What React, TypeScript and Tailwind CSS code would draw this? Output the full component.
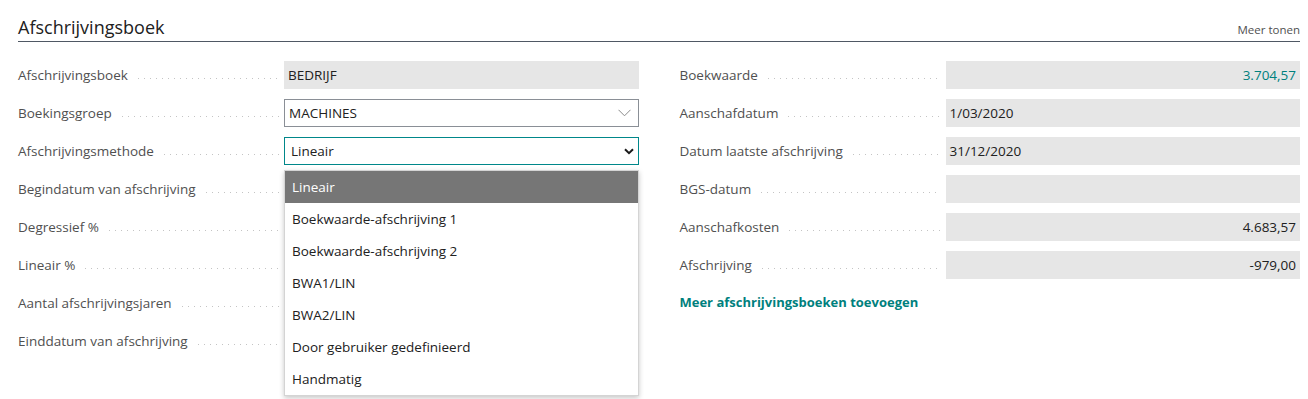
import React from "react";

const font = { fontFamily: '"Open Sans", "Noto Sans", sans-serif' };

function Dots() {
  return (
    <div className="flex-1 mx-[10px] mr-[5px] self-center translate-y-[3px] h-px bg-[linear-gradient(to_right,#c4c4c4_1px,transparent_1px)] bg-[length:6px_1px] bg-repeat-x" />
  );
}

function Row({ label, children }: { label: string; children: React.ReactNode }) {
  return (
    <div className="flex items-center h-[28px]">
      <div className="flex items-center w-[266px] shrink-0 h-full">
        <span className="text-[13.5px] text-[#505050] whitespace-nowrap">{label}</span>
        <Dots />
      </div>
      <div className="flex-1 h-full relative">{children}</div>
    </div>
  );
}

function ReadField({ value, right, teal }: { value?: string; right?: boolean; teal?: boolean }) {
  return (
    <div
      className={`h-full bg-[#e6e6e6] flex items-center px-[4px] text-[13.5px] ${right ? "justify-end" : ""} ${teal ? "text-[#00807d]" : "text-[#212121]"}`}
    >
      {value}
    </div>
  );
}

const options = [
  "Lineair",
  "Boekwaarde-afschrijving 1",
  "Boekwaarde-afschrijving 2",
  "BWA1/LIN",
  "BWA2/LIN",
  "Door gebruiker gedefinieerd",
  "Handmatig",
];

export default function App() {
  return (
    <div className="w-[1308px] h-[399px] bg-white overflow-hidden pl-[18px] pr-[8px]" style={font}>
      <div className="flex items-end justify-between h-[42px] border-b border-[#4f5864] pb-[5px]">
        <span className="text-[18px] text-[#212121] leading-none">Afschrijvingsboek</span>
        <span className="text-[11.5px] text-[#505050] leading-none mb-[1px]">Meer tonen</span>
      </div>
      <div className="grid grid-cols-2 gap-x-[41px] mt-[19px]">
        <div className="flex flex-col gap-[10px]">
          <Row label="Afschrijvingsboek">
            <ReadField value="BEDRIJF" />
          </Row>
          <Row label="Boekingsgroep">
            <div className="h-full border border-[#8a8f96] bg-white flex items-center justify-between pl-[4px] pr-[7px] text-[13.5px] text-[#212121]">
              <span>MACHINES</span>
              <svg width="13" height="8" viewBox="0 0 13 8">
                <path d="M0.5 0.8 L6.5 6.8 L12.5 0.8" fill="none" stroke="#8a8a8a" strokeWidth="1" />
              </svg>
            </div>
          </Row>
          <Row label="Afschrijvingsmethode">
            <div className="h-full border border-[#00878a] bg-white flex items-center justify-between pl-[6px] pr-[4px] text-[13.5px] text-[#212121]">
              <span>Lineair</span>
              <svg width="10" height="7" viewBox="0 0 10 7">
                <path d="M1 1.2 L5 5.2 L9 1.2" fill="none" stroke="#1a1a1a" strokeWidth="2" />
              </svg>
            </div>
            <div className="absolute left-0 right-0 top-[33px] z-10 bg-white border border-[#d4d4d4] shadow-[0_2px_5px_rgba(0,0,0,0.22)]">
              {options.map((o, i) => (
                <div
                  key={o}
                  className={`h-[32px] flex items-center pl-[7px] text-[13.5px] ${i === 0 ? "bg-[#767676] text-white" : "text-[#212121]"}`}
                >
                  {o}
                </div>
              ))}
            </div>
          </Row>
          <Row label="Begindatum van afschrijving">
            <ReadField />
          </Row>
          <Row label="Degressief %">
            <ReadField />
          </Row>
          <Row label="Lineair %">
            <ReadField />
          </Row>
          <Row label="Aantal afschrijvingsjaren">
            <ReadField />
          </Row>
          <Row label="Einddatum van afschrijving">
            <ReadField />
          </Row>
        </div>
        <div className="flex flex-col gap-[10px]">
          <Row label="Boekwaarde">
            <ReadField value="3.704,57" right teal />
          </Row>
          <Row label="Aanschafdatum">
            <ReadField value="1/03/2020" />
          </Row>
          <Row label="Datum laatste afschrijving">
            <ReadField value="31/12/2020" />
          </Row>
          <Row label="BGS-datum">
            <ReadField />
          </Row>
          <Row label="Aanschafkosten">
            <ReadField value="4.683,57" right />
          </Row>
          <Row label="Afschrijving">
            <ReadField value="-979,00" right />
          </Row>
          <div className="h-[28px] flex items-center">
            <span className="text-[13px] font-bold text-[#00807d]">Meer afschrijvingsboeken toevoegen</span>
          </div>
        </div>
      </div>
    </div>
  );
}
